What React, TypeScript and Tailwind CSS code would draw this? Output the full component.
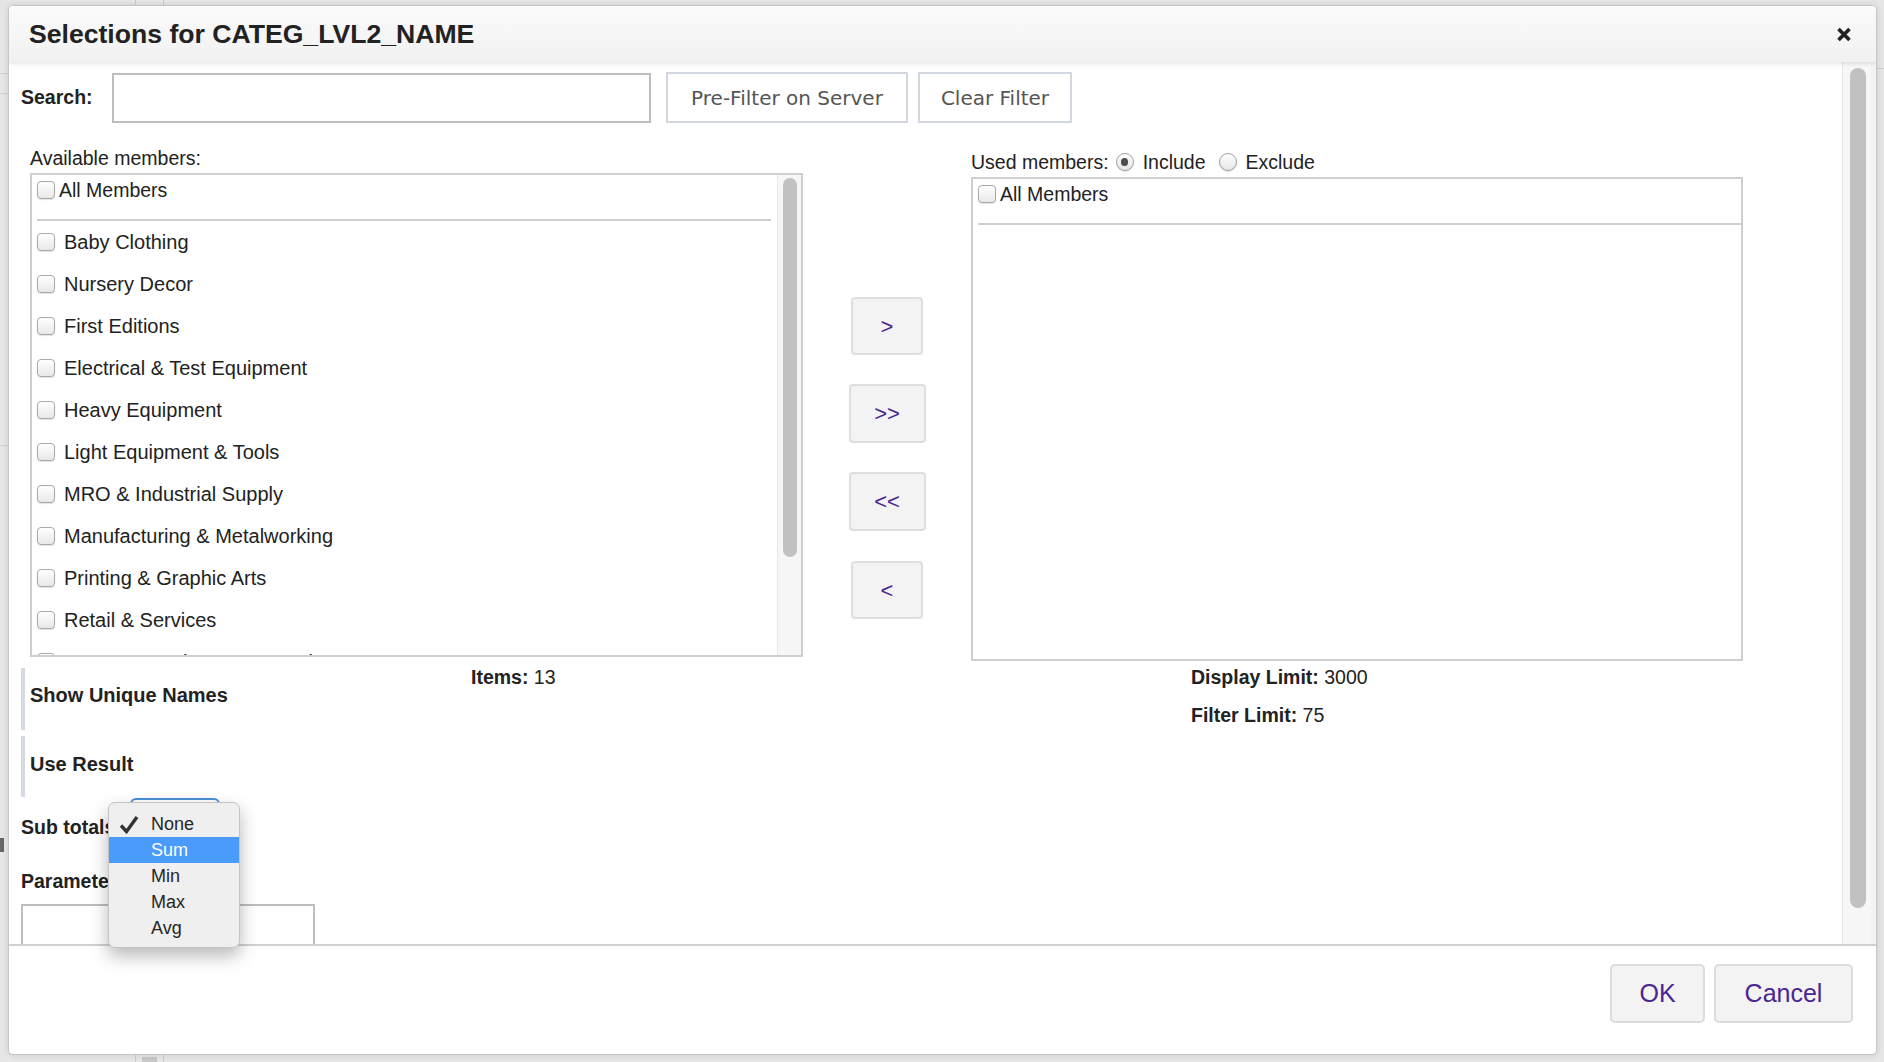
import React from "react";

const members = [
  "Baby Clothing",
  "Nursery Decor",
  "First Editions",
  "Electrical & Test Equipment",
  "Heavy Equipment",
  "Light Equipment & Tools",
  "MRO & Industrial Supply",
  "Manufacturing & Metalworking",
  "Printing & Graphic Arts",
  "Retail & Services",
  "Cameras & Photo Accessories",
  "Collectibles",
  "Antiques",
];

const Checkbox = () => (
  <span className="block w-[18px] h-[18px] shrink-0 rounded-[4px] border border-[#a8a8a8] bg-linear-to-b from-white to-[#e8e8e8] shadow-[0_1px_1px_rgba(0,0,0,0.12)]" />
);

const Radio = ({ checked }: { checked?: boolean }) => (
  <span className="flex items-center justify-center w-[18px] h-[18px] shrink-0 rounded-full border border-[#a0a0a0] bg-linear-to-b from-white to-[#e6e6e6] shadow-[0_1px_1px_rgba(0,0,0,0.12)]">
    {checked && <span className="block w-[7px] h-[8px] rounded-full bg-[#4d4d4d]" />}
  </span>
);

const MoveButton = ({ label, wide }: { label: string; wide?: boolean }) => (
  <div
    className={`flex items-center justify-center rounded-[4px] border-2 border-[#dedede] bg-[#f3f3f3] text-[22px] text-[#4b2592] ${
      wide ? "w-[77px] h-[59px]" : "w-[72px] h-[58px]"
    }`}
  >
    {label}
  </div>
);

export default function App() {
  return (
    <div className="relative w-[1884px] h-[1062px] overflow-hidden bg-[#e6e6e6] pt-[5px] pl-[8px] font-['Liberation_Sans',Arial,Helvetica,sans-serif] text-[#222]">
      {/* page behind the dialog */}
      <div className="absolute left-[135px] top-0 w-px h-[5px] bg-[#cdcdcd]" />
      <div className="absolute left-[163px] top-0 w-px h-[5px] bg-[#cdcdcd]" />
      <div className="absolute left-[135px] top-[1055px] w-[29px] h-[7px] border-x border-[#cdcdcd]" />
      <div className="absolute left-[142px] top-[1057px] w-[15px] h-[5px] bg-[#c8c8c8]" />
      <div className="absolute left-0 top-[73px] w-[8px] h-px bg-[#d2d2d2]" />
      <div className="absolute left-0 top-[93px] w-[8px] h-px bg-[#d2d2d2]" />
      <div className="absolute left-0 top-[445px] w-[8px] h-px bg-[#d2d2d2]" />
      <div className="absolute left-0 top-[838px] w-[4px] h-[14px] bg-[#666]" />
      <div className="absolute left-[1877px] top-[68px] w-[7px] h-px bg-[#cfcfcf]" />

      <div className="relative z-10 flex flex-col w-[1869px] h-[1050px] rounded-[5px] border border-[#c6c6c6] bg-white shadow-[0_0_6px_rgba(0,0,0,0.12)] overflow-hidden">
        {/* header */}
        <div className="relative z-10 flex items-center justify-between h-[56px] shrink-0 pl-[20px] pr-[24px] bg-linear-to-b from-[#fbfbfb] to-[#f1f1f1] shadow-[0_2px_4px_rgba(0,0,0,0.1)]">
          <div className="text-[26.6px] font-bold leading-[30px] text-[#222]">Selections for CATEG_LVL2_NAME</div>
          <svg width="16" height="15" viewBox="0 0 16 15">
            <path d="M2.5 2 L13.5 13 M13.5 2 L2.5 13" stroke="#222" strokeWidth="3.6" />
          </svg>
        </div>

        {/* body */}
        <div className="flex h-[882px] shrink-0">
          <div className="flex-1 overflow-hidden pl-[12px]">
            {/* search row */}
            <div className="flex items-center h-[51px] mt-[10px]">
              <div className="w-[91px] text-[19.5px] font-bold">Search:</div>
              <div className="w-[539px] h-[50px] border-2 border-[#bdbdbd] bg-white" />
              <div className="ml-[15px] flex items-center justify-center w-[242px] h-[51px] border-2 border-[#d3d7df] bg-white font-['DejaVu_Sans',Verdana,sans-serif] text-[20px] text-[#555]">
                Pre-Filter on Server
              </div>
              <div className="ml-[10px] flex items-center justify-center w-[154px] h-[51px] border-2 border-[#d3d7df] bg-white font-['DejaVu_Sans',Verdana,sans-serif] text-[20px] text-[#555]">
                Clear Filter
              </div>
            </div>

            {/* member lists */}
            <div className="flex mt-[23px] text-[19.5px]">
              <div className="ml-[9px] w-[773px]">
                <div className="h-[24px] leading-[24px]">Available members:</div>
                <div className="flex mt-[3px] h-[484px] border-2 border-[#cfcfcf]">
                  <div className="flex-1 overflow-hidden">
                    <div className="flex items-center gap-[4px] pl-[5px] pt-[6px] leading-[18px]">
                      <Checkbox />
                      <span>All Members</span>
                    </div>
                    <div className="mt-[20px] ml-[5px] mr-[6px] h-[2px] bg-[#cfcfcf]" />
                    {members.map((m) => (
                      <div key={m} className="flex items-center gap-[9px] h-[42px] pl-[5px] whitespace-nowrap text-[20px]">
                        <Checkbox />
                        <span>{m}</span>
                      </div>
                    ))}
                  </div>
                  <div className="w-[24px] shrink-0 border-l border-[#e8e8e8] bg-[#f6f6f6] pl-[5px] pt-[3px]">
                    <div className="w-[14px] h-[379px] rounded-full bg-[#c1c1c1]" />
                  </div>
                </div>
              </div>

              <div className="flex flex-col items-center w-[168px] pt-[151px]">
                <MoveButton label=">" />
                <div className="mt-[29px]">
                  <MoveButton label=">>" wide />
                </div>
                <div className="mt-[29px]">
                  <MoveButton label="<<" wide />
                </div>
                <div className="mt-[30px]">
                  <MoveButton label="<" />
                </div>
              </div>

              <div className="w-[772px] pt-[4px]">
                <div className="flex items-center h-[24px] leading-[24px]">
                  <span>Used members:</span>
                  <span className="ml-[7px]"><Radio checked /></span>
                  <span className="ml-[9px]">Include</span>
                  <span className="ml-[13px]"><Radio /></span>
                  <span className="ml-[9px]">Exclude</span>
                </div>
                <div className="mt-[3px] h-[484px] border-2 border-[#cfcfcf]">
                  <div className="flex items-center gap-[4px] pl-[5px] pt-[6px] leading-[18px]">
                    <Checkbox />
                    <span>All Members</span>
                  </div>
                  <div className="mt-[20px] ml-[5px] h-[2px] bg-[#cfcfcf]" />
                </div>
              </div>
            </div>

            {/* options and counters */}
            <div className="flex text-[19.5px] leading-[24px]">
              <div className="w-[450px]">
                <div className="mt-[7px] h-[62px] border-l-4 border-[#d5dae2] pl-[5px] pt-[15px] font-bold text-[20px]">
                  Show Unique Names
                </div>
                <div className="mt-[6px] h-[61px] border-l-4 border-[#d5dae2] pl-[5px] pt-[16px] font-bold text-[20px]">
                  Use Result
                </div>
                <div className="flex items-start h-[42px]">
                  <div className="w-[109px] mt-[18px] font-bold whitespace-nowrap">Sub totals</div>
                  <div className="mt-[1px] w-[90px] h-[32px] rounded-[6px] border-2 border-[#4a8fd8] bg-white" />
                </div>
                <div className="mt-[30px] font-bold">Parameters</div>
                <div className="mt-[11px] w-[294px] h-[50px] border-2 border-[#bdbdbd]" />
              </div>
              <div className="w-[720px] mt-[4px]">
                <span className="font-bold">Items:</span> 13
              </div>
              <div className="mt-[4px]">
                <div>
                  <span className="font-bold">Display Limit:</span> 3000
                </div>
                <div className="mt-[14px]">
                  <span className="font-bold">Filter Limit:</span> 75
                </div>
              </div>
            </div>
          </div>

          <div className="w-[29px] shrink-0 border-l border-[#e6e6e6] bg-[#f7f7f7] pl-[7px] pt-[6px]">
            <div className="w-[16px] h-[840px] rounded-full bg-[#c1c1c1]" />
          </div>
          <div className="w-[5px] shrink-0 bg-[#f3f3f3]" />
        </div>

        {/* footer */}
        <div className="flex justify-end items-start gap-[9px] h-[108px] shrink-0 border-t-2 border-[#d0d0d0] pt-[18px] pr-[23px]">
          <div className="flex items-center justify-center w-[95px] h-[59px] rounded-[5px] border-2 border-[#dcdcdc] bg-[#f3f3f3] text-[25px] text-[#4b2592]">
            OK
          </div>
          <div className="flex items-center justify-center w-[139px] h-[59px] rounded-[5px] border-2 border-[#dcdcdc] bg-[#f3f3f3] text-[25px] text-[#4b2592]">
            Cancel
          </div>
        </div>
      </div>

      {/* open select menu */}
      <div className="absolute z-20 left-[108px] top-[802px] w-[132px] h-[146px] rounded-[7px] border border-[#c4c4c4] bg-[#efefef] py-[8px] shadow-[0_8px_18px_rgba(0,0,0,0.28)] text-[18px] leading-[26px] text-[#262626]">
        <div className="relative h-[26px] pl-[42px]">
          <svg className="absolute left-[10px] top-[4px]" width="20" height="19" viewBox="0 0 20 19">
            <path d="M2 10.5 L7.5 16.5 L18 2" fill="none" stroke="#333" strokeWidth="3.4" strokeLinejoin="miter" />
          </svg>
          None
        </div>
        <div className="h-[26px] pl-[42px] bg-[#4a9bfb] text-white">Sum</div>
        <div className="h-[26px] pl-[42px]">Min</div>
        <div className="h-[26px] pl-[42px]">Max</div>
        <div className="h-[26px] pl-[42px]">Avg</div>
      </div>
    </div>
  );
}
